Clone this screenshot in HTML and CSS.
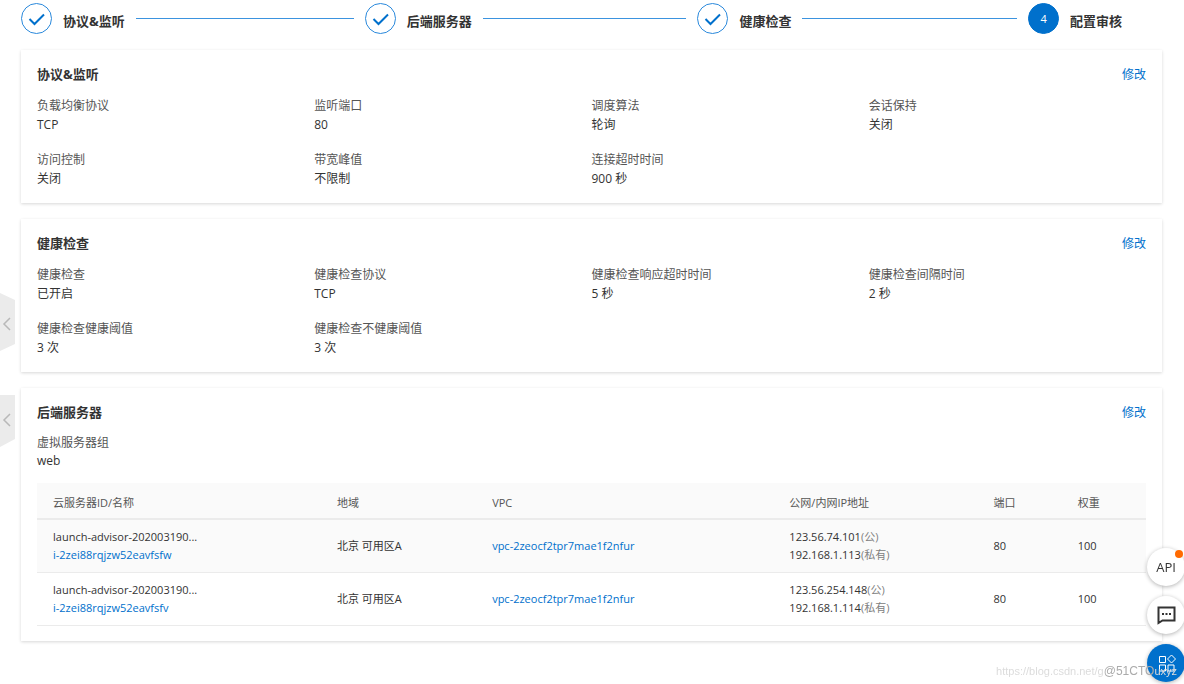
FILE: index.html
```html
<!DOCTYPE html>
<html lang="zh-CN">
<head>
<meta charset="utf-8">
<title>配置审核</title>
<link rel="stylesheet" href="styles.css">
</head>
<body>
<main class="page">
  <ol class="steps">
    <li class="step"><span class="step-mark"><svg viewBox="0 0 31 31"><path d="M8.500 16l5 5 9.500-9.500"/></svg></span><span class="step-label">协议&amp;监听</span><span class="step-line"></span></li>
    <li class="step"><span class="step-mark"><svg viewBox="0 0 31 31"><path d="M8.500 16l5 5 9.500-9.500"/></svg></span><span class="step-label">后端服务器</span><span class="step-line"></span></li>
    <li class="step"><span class="step-mark"><svg viewBox="0 0 31 31"><path d="M8.500 16l5 5 9.500-9.500"/></svg></span><span class="step-label">健康检查</span><span class="step-line"></span></li>
    <li class="step"><span class="step-mark current">4</span><span class="step-label">配置审核</span></li>
  </ol>

  <section class="card">
    <header class="card-head"><h2 class="card-title">协议&amp;监听</h2><a class="link edit" href="#">修改</a></header>
    <dl class="fields">
      <div><dt>负载均衡协议</dt><dd>TCP</dd></div>
      <div><dt>监听端口</dt><dd>80</dd></div>
      <div><dt>调度算法</dt><dd>轮询</dd></div>
      <div><dt>会话保持</dt><dd>关闭</dd></div>
      <div><dt>访问控制</dt><dd>关闭</dd></div>
      <div><dt>带宽峰值</dt><dd>不限制</dd></div>
      <div><dt>连接超时时间</dt><dd>900 秒</dd></div>
    </dl>
  </section>

  <section class="card">
    <header class="card-head"><h2 class="card-title">健康检查</h2><a class="link edit" href="#">修改</a></header>
    <dl class="fields">
      <div><dt>健康检查</dt><dd>已开启</dd></div>
      <div><dt>健康检查协议</dt><dd>TCP</dd></div>
      <div><dt>健康检查响应超时时间</dt><dd>5 秒</dd></div>
      <div><dt>健康检查间隔时间</dt><dd>2 秒</dd></div>
      <div><dt>健康检查健康阈值</dt><dd>3 次</dd></div>
      <div><dt>健康检查不健康阈值</dt><dd>3 次</dd></div>
    </dl>
  </section>

  <section class="card">
    <header class="card-head"><h2 class="card-title">后端服务器</h2><a class="link edit" href="#">修改</a></header>
    <dl class="fields group">
      <div><dt>虚拟服务器组</dt><dd>web</dd></div>
    </dl>
    <table class="servers">
      <colgroup><col class="c-id"><col class="c-zone"><col class="c-vpc"><col class="c-ip"><col class="c-num"><col class="c-num"></colgroup>
      <thead><tr><th>云服务器ID/名称</th><th>地域</th><th>VPC</th><th>公网/内网IP地址</th><th>端口</th><th>权重</th></tr></thead>
      <tbody>
        <tr>
          <td><div>launch-advisor-202003190...</div><a class="link" href="#">i-2zei88rqjzw52eavfsfw</a></td>
          <td>北京 可用区A</td>
          <td><a class="link" href="#">vpc-2zeocf2tpr7mae1f2nfur</a></td>
          <td><div>123.56.74.101<span class="note">(公)</span></div><div>192.168.1.113<span class="note">(私有)</span></div></td>
          <td>80</td><td>100</td>
        </tr>
        <tr>
          <td><div>launch-advisor-202003190...</div><a class="link" href="#">i-2zei88rqjzw52eavfsfv</a></td>
          <td>北京 可用区A</td>
          <td><a class="link" href="#">vpc-2zeocf2tpr7mae1f2nfur</a></td>
          <td><div>123.56.254.148<span class="note">(公)</span></div><div>192.168.1.114<span class="note">(私有)</span></div></td>
          <td>80</td><td>100</td>
        </tr>
      </tbody>
    </table>
  </section>
</main>

<button class="side-tab upper" aria-label="展开"><svg viewBox="0 0 15 58"><path class="tab-bg" d="M0 0l15 7v44L0 58z"/><path class="tab-arrow" d="M10 25l-6 6 6 6"/></svg></button>
<button class="side-tab lower" aria-label="展开"><svg viewBox="0 0 15 52"><path class="tab-bg" d="M0 0h15v44L0 52z"/><path class="tab-arrow" d="M10 19l-6 6 6 6"/></svg></button>

<nav class="floats">
  <button class="float">API<span class="dot"></span></button>
  <button class="float" aria-label="消息"><svg viewBox="0 0 38 38"><path class="chat" d="M11.500 11.500h16v13H15.500L11.500 27z"/><path class="chat-dots" d="M15 18h2M18.500 18h2M22 18h2"/></svg></button>
  <button class="float primary" aria-label="应用"><svg viewBox="0 0 38 38"><path class="apps" d="M12.500 12.500h6v6h-6zM12.500 21h6v6h-6zM21 21h6v6h-6zM24.500 11l4 4-4 4-4-4z"/></svg></button>
</nav>
<div class="watermark">https://blog.csdn.net/g<span class="site">@51CTO</span>uxyz</div>
</body>
</html>
```
FILE: styles.css
```css
* { box-sizing: border-box; }
body {
  margin: 0;
  background: #fff;
  color: #333;
  font: 12px/19px "Open Sans", "Noto Sans CJK SC", sans-serif;
}
.page { padding: 3px 22px 16px 21px; display: flex; flex-direction: column; gap: 16px; }

.steps {
  display: grid;
  grid-template-columns: 344fr 333fr 331fr 134fr;
  list-style: none;
  margin: 0;
  padding: 0;
}
.step { display: flex; align-items: center; gap: 11px; padding-right: 11px; }
.step-mark {
  width: 31px;
  height: 31px;
  border: 1px solid #2a89dc;
  border-radius: 50%;
  flex: none;
  display: flex;
  align-items: center;
  justify-content: center;
}
.step-mark svg { width: 31px; height: 31px; flex: none; fill: none; stroke: #0070cc; stroke-width: 2; }
.step-mark.current { background: #0070cc; border-color: #0070cc; color: #fff; font-size: 11px; }
.step-label { font-size: 13px; font-weight: 700; line-height: 20px; padding-top: 4px; white-space: nowrap; }
.step-line { flex: 1; height: 1px; background: #3b93df; }

.card {
  background: #fff;
  padding: 14px 16px 15px;
  box-shadow: 0 1px 3px rgba(0, 0, 0, .16);
}
.card-head { display: flex; justify-content: space-between; align-items: center; margin-bottom: 12px; }
.card-title { margin: 0; font-size: 13px; line-height: 20px; font-weight: 700; }
.link { color: #0070cc; text-decoration: none; }
.fields { margin: 0; display: grid; grid-template-columns: repeat(4, 1fr); row-gap: 16px; }
.fields dt { color: #555; }
.fields dd { margin: 0; }
.group { line-height: 18px; margin-bottom: 13px; }

.servers { width: 100%; table-layout: fixed; border-collapse: collapse; font-size: 11px; line-height: 18px; }
.c-id { width: 25.6%; }
.c-zone { width: 14%; }
.c-vpc { width: 26.8%; }
.c-ip { width: 18.4%; }
.c-num { width: 7.6%; }
.servers th, .servers td { text-align: left; padding: 8px 16px; border-bottom: 1px solid #ebebeb; }
.servers th { height: 36px; padding-top: 10px; padding-bottom: 6px; background: #fafafa; color: #555; font-weight: 400; border-bottom-width: 2px; }
.servers td { height: 53px; }
.servers tbody tr:first-child { background: #fafafa; }
.note { color: #808080; }

.side-tab { position: fixed; left: 0; width: 15px; padding: 0; border: 0; background: none; }
.side-tab svg { display: block; width: 15px; }
.upper { top: 293px; }
.lower { top: 395px; }
.tab-bg { fill: #ebebeb; }
.tab-arrow { fill: none; stroke: #b8b8b8; stroke-width: 1.500; }

.floats { position: fixed; right: -1px; bottom: 2px; display: flex; flex-direction: column; gap: 10px; }
.float {
  position: relative;
  width: 38px;
  height: 38px;
  padding: 0;
  border: 0;
  border-radius: 50%;
  background: #fff;
  color: #333;
  font: 13px/38px "Open Sans", sans-serif;
  box-shadow: 0 1px 4px rgba(0, 0, 0, .3);
}
.float svg { display: block; width: 38px; height: 38px; fill: none; }
.float.primary { background: #0070cc; }
.dot { position: absolute; top: 2px; right: 2px; width: 8px; height: 8px; border-radius: 50%; background: #ff6a00; }
.chat { stroke: #333; stroke-width: 2; }
.chat-dots { stroke: #333; stroke-width: 2; }
.apps { stroke: #fff; stroke-width: 1; }

.watermark {
  position: fixed;
  right: 7px;
  bottom: 4px;
  font: 11px/18px "Liberation Sans", sans-serif;
  color: #dcdcdc;
}
.site { color: #ababab; font-size: 12px; }
```
